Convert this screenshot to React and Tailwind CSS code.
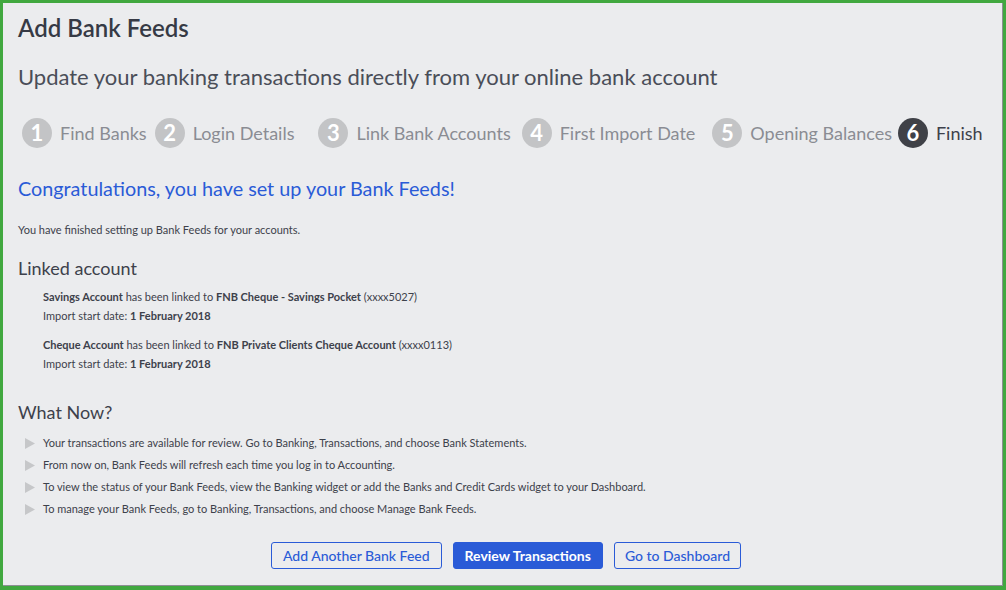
import React from "react";

function Step({ n, label, active, className = "" }) {
  return (
    <div className={"flex items-center " + className}>
      <div
        className={
          "w-[30px] h-[30px] rounded-full flex items-center justify-center text-white font-bold text-[22px] leading-none " +
          (active ? "bg-[#3f4147]" : "bg-[#c3c4c6]")
        }
      >
        {n}
      </div>
      <span
        className={
          "ml-[8px] text-[18px] " + (active ? "text-[#3d414b]" : "text-[#8a8c93]")
        }
      >
        {label}
      </span>
    </div>
  );
}

function Bullet({ children }) {
  return (
    <li className="flex items-center h-[22px]">
      <svg width="10" height="11" viewBox="0 0 10 11" className="ml-[7px] mr-[8px]">
        <polygon points="0,0 10,5.5 0,11" fill="#c6c7c9" />
      </svg>
      <span>{children}</span>
    </li>
  );
}

export default function App() {
  return (
    <div
      className="w-[1006px] h-[590px] bg-[#41a83f] p-[3px] pr-[3px] pb-[4px]"
      style={{ fontFamily: "Lato, 'Noto Sans', sans-serif" }}
    >
      <div className="w-full h-full bg-[#ebecee] border-r border-b border-[#8d8f93] pl-[15px] pr-[8px] text-[#3d414b]">
        <h1 className="text-[24px] font-semibold text-[#363a45] pt-[10px] leading-[30px]">
          Add Bank Feeds
        </h1>
        <p className="text-[22px] text-[#4a4e58] mt-[19px] leading-[30px]">
          Update your banking transactions directly from your online bank account
        </p>
        <div className="flex items-center mt-[26px] ml-[4px] h-[30px]">
          <Step n="1" label="Find Banks" />
          <Step n="2" label="Login Details" className="ml-[8px]" />
          <Step n="3" label="Link Bank Accounts" className="ml-[24px]" />
          <Step n="4" label="First Import Date" className="ml-[11px]" />
          <Step n="5" label="Opening Balances" className="ml-[17px]" />
          <Step n="6" label="Finish" active className="ml-[6px]" />
        </div>
        <h2 className="text-[19.8px] text-[#2a5bd7] mt-[27px] leading-[26px]">
          Congratulations, you have set up your Bank Feeds!
        </h2>
        <p className="text-[11px] mt-[22px] leading-[14px]">
          You have finished setting up Bank Feeds for your accounts.
        </p>
        <h3 className="text-[18px] mt-[19px] leading-[24px]">Linked account</h3>
        <div className="ml-[25px] mt-[7px] text-[11px] leading-[19px]">
          <div>
            <span className="font-bold">Savings Account</span> has been linked to{" "}
            <span className="font-bold">FNB Cheque - Savings Pocket</span> (xxxx5027)
          </div>
          <div>
            Import start date: <span className="font-bold">1 February 2018</span>
          </div>
          <div className="mt-[10px]">
            <span className="font-bold">Cheque Account</span> has been linked to{" "}
            <span className="font-bold">FNB Private Clients Cheque Account</span> (xxxx0113)
          </div>
          <div>
            Import start date: <span className="font-bold">1 February 2018</span>
          </div>
        </div>
        <h3 className="text-[18px] mt-[27px] leading-[24px]">What Now?</h3>
        <ul className="mt-[8px] text-[11px]">
          <Bullet>Your transactions are available for review. Go to Banking, Transactions, and choose Bank Statements.</Bullet>
          <Bullet>From now on, Bank Feeds will refresh each time you log in to Accounting.</Bullet>
          <Bullet>To view the status of your Bank Feeds, view the Banking widget or add the Banks and Credit Cards widget to your Dashboard.</Bullet>
          <Bullet>To manage your Bank Feeds, go to Banking, Transactions, and choose Manage Bank Feeds.</Bullet>
        </ul>
        <div className="flex justify-center gap-[11px] mt-[22px]">
          <button className="h-[27px] px-[11px] border border-[#2a5bd7] rounded-[3px] text-[#2a5bd7] text-[14px] font-medium bg-transparent">
            Add Another Bank Feed
          </button>
          <button className="h-[27px] px-[11px] border border-[#2a5bd7] rounded-[3px] text-white text-[14px] font-bold bg-[#2a5bd7]">
            Review Transactions
          </button>
          <button className="h-[27px] px-[10px] border border-[#2a5bd7] rounded-[3px] text-[#2a5bd7] text-[14px] font-medium bg-transparent">
            Go to Dashboard
          </button>
        </div>
      </div>
    </div>
  );
}
